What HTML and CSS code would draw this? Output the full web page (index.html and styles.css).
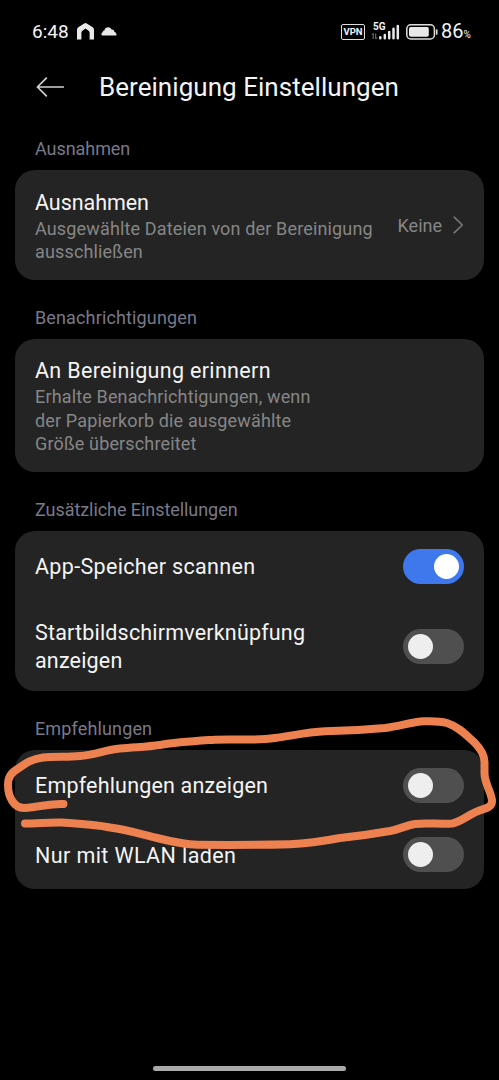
FILE: index.html
```html
<!DOCTYPE html>
<html lang="de">
<head>
<meta charset="utf-8">
<title>Bereinigung Einstellungen</title>
<link rel="stylesheet" href="styles.css">
</head>
<body>
<div class="screen">
  <header class="status">
    <div class="status-left">
      <span class="time">6:48</span>
      <svg class="home" width="17" height="17" viewBox="0 0 17 17"><path d="M0 6.8Q0 5.2 1.3 4.3L7.2.5Q8.5-.3 9.8.5L15.7 4.3Q17 5.2 17 6.8V16.4H12.6V9.8Q12.6 8.8 11.8 8.1L8.5 5.6 5.2 8.1Q4.4 8.8 4.4 9.8V16.4H0Z" fill="#e9e9e9"/></svg>
      <svg class="cloud" width="16" height="9" viewBox="0 0 16 9"><path d="M2.4 8.6C.2 8.6-.4 6.2 1.6 5.2 1.8 3.9 2.7 3.4 3.4 3.4 4.2-.2 8.8-1 10.6 2.5 12.4 2.3 13.3 3.5 13.4 4.9 15 5.2 15.8 6.7 15.3 8.6Z" fill="#e9e9e9"/></svg>
    </div>
    <div class="status-right">
      <span class="vpn">VPN</span>
      <div class="signal">
        <span class="net">5G</span>
        <svg width="29" height="16" viewBox="0 0 29 16">
          <path d="M2.2 15V9.5M.8 11 2.2 9.5M4.7 9.5V15M4.7 15 6.1 13.5" fill="none" stroke="#777" stroke-width="1"/>
          <path d="M9.3 13.2V14.3M13.8 11V14.3M18.2 8V14.3M22.5 4.8V14.3M26.8 2V14.3" fill="none" stroke="#e9e9e9" stroke-width="2.5" stroke-linecap="round"/>
        </svg>
      </div>
      <svg class="battery" width="32" height="16" viewBox="0 0 32 16"><rect x=".8" y=".8" width="27.6" height="14.2" rx="4" fill="none" stroke="#ddd" stroke-width="1.5"/><rect x="3" y="3" width="19.8" height="9.8" rx="1.8" fill="#e9e9e9"/><path d="M30.7 6V10" stroke="#ddd" stroke-width="1.7" stroke-linecap="round"/></svg>
      <span class="percent">86<small>%</small></span>
    </div>
  </header>

  <div class="titlebar">
    <svg class="back" width="29" height="20" viewBox="0 0 29 20"><path d="M10.3 1.2 1.4 10 10.3 18.8M1.4 10H27.3" fill="none" stroke="#d2d2d2" stroke-width="1.7" stroke-linecap="round" stroke-linejoin="round"/></svg>
    <h1>Bereinigung Einstellungen</h1>
  </div>

  <main>
    <h2 class="tight-label">Ausnahmen</h2>
    <section class="card exceptions">
      <div class="copy">
        <h3 class="tight">Ausnahmen</h3>
        <p>Ausgewählte Dateien von der Bereinigung<br>ausschließen</p>
      </div>
      <span class="value">Keine</span>
      <svg class="chevron" width="11" height="18" viewBox="0 0 11 18"><path d="M1.2 1.2 9.3 9 1.2 16.8" fill="none" stroke="#777" stroke-width="1.6" stroke-linecap="round" stroke-linejoin="round"/></svg>
    </section>

    <h2>Benachrichtigungen</h2>
    <section class="card reminder">
      <div class="copy">
        <h3>An Bereinigung erinnern</h3>
        <p>Erhalte Benachrichtigungen, wenn<br>der Papierkorb die ausgewählte<br>Größe überschreitet</p>
      </div>
    </section>

    <h2 class="tight-label">Zusätzliche Einstellungen</h2>
    <section class="card">
      <div class="row"><h3>App-Speicher scannen</h3><span class="switch on"></span></div>
      <div class="row tall"><h3 class="snug">Startbildschirmverknüpfung<br>anzeigen</h3><span class="switch"></span></div>
    </section>

    <h2>Empfehlungen</h2>
    <section class="card">
      <div class="row"><h3 class="snug">Empfehlungen anzeigen</h3><span class="switch"></span></div>
      <div class="row last"><h3 class="wide">Nur mit WLAN laden</h3><span class="switch"></span></div>
    </section>
  </main>
  <div class="gesture"></div>

  <svg class="marker" width="499" height="140" viewBox="0 715 499 140">
    <path d="M63.5 804C52 803 40 807 24 808C14 808 8 797 8 785C8 776 12 772 19 768C26 763 32 759 43 757.5C54 756 68 757.5 80 756C94 755 105 750 120 748.5C135 747 147 747 160 745C178 742 196 741 215 739.7C235 738.6 255 741 275 738C290 736 308 732 325 731.3C345 731 368 729.6 385 728C400 726 412 722 424 721.3C433 721 440 721 447 723C459 727 466 735 474 742C481 749 484.5 756 484.5 762V773C484.5 784 492 793 492 801C492 808 485 808 477 811.5C468 815 461 822 452 823.5C438 824.5 427 822.5 415 824C405 825.5 401 829 390 831C373 834 359 836 340 838C324 841 308 843.5 290 844.2C260 845 223 845 198 844.8C185 844.5 171 841.5 157 838C142 834.5 127 829.5 110 827.5C93 824 77 823.5 62 822.5C50 822 38 823.5 25 823.5"/>
  </svg>
</div>
</body>
</html>
```

FILE: styles.css
```css
* { box-sizing: border-box; }
body { margin: 0; background: #000; color: #f4f4f4; font-family: Roboto, "Noto Sans", sans-serif; }
.screen { position: relative; display: flex; flex-direction: column; width: 499px; height: 1080px; overflow: hidden; background: #000; }
h1, h2, h3, p { margin: 0; font-weight: 400; white-space: nowrap; }

.status { display: flex; justify-content: space-between; height: 62px; padding: 19px 28px 0 32px; }
.status-left, .status-right { display: flex; align-items: center; height: 25px; }
.time { width: 37px; font-size: 19px; line-height: 25px; }
.home { margin-left: 8px; }
.cloud { margin-left: 7px; }
.vpn { width: 24px; height: 16px; border: 1.5px solid #ddd; border-radius: 2px; font-size: 9.5px; font-weight: 700; line-height: 14px; text-align: center; }
.signal { position: relative; width: 29px; height: 16px; margin-left: 6px; }
.signal svg { display: block; }
.net { position: absolute; top: -2px; left: 2px; font-size: 10px; font-weight: 700; line-height: 10px; }
.battery { margin-left: 6px; }
.percent { width: 30px; padding-top: 2px; margin-left: 3px; font-size: 20px; line-height: 25px; white-space: nowrap; }
.percent small { font-size: 10px; }

.titlebar { display: flex; align-items: center; height: 49px; padding-left: 36px; }
.back { margin-right: 34px; }
h1 { font-size: 26px; line-height: 36px; letter-spacing: .04px; }

main { padding: 0 15px; }
h2 { display: flex; align-items: center; height: 59px; padding: 16px 0 0 20px; color: #797989; font-size: 18px; line-height: 24px; letter-spacing: .14px; }
.tight-label { letter-spacing: -.06px; }
.card { overflow: hidden; padding: 0 20px; border-radius: 20px; background: #242424; }
.exceptions { display: flex; align-items: center; height: 110px; }
.reminder { display: flex; align-items: center; height: 133px; }
.copy { flex: 1; padding-top: 2px; }
h3 { font-size: 21.5px; line-height: 28px; letter-spacing: .33px; }
.row h3 { padding-top: 2px; }
.tight { letter-spacing: -.05px; }
.snug { letter-spacing: .18px; }
.wide { letter-spacing: .4px; }
p { color: #868686; font-size: 18px; line-height: 23.4px; letter-spacing: .15px; }
.value { padding-top: 1px; color: #868686; font-size: 18px; line-height: 24px; }
.chevron { margin-left: 11px; }
.row { display: flex; align-items: center; justify-content: space-between; height: 70px; }
.tall { height: 90px; }
.last { height: 69px; }
.switch { display: flex; align-items: center; width: 61px; height: 35px; padding: 0 5px; border-radius: 18px; background: #4f4f4f; }
.switch::before { content: ""; width: 25px; height: 25px; border-radius: 50%; background: #eee; }
.switch.on { justify-content: flex-end; background: #3f78ed; }
.switch.on::before { background: #fff; }

.gesture { width: 193px; height: 5px; margin: auto auto 9px; border-radius: 3px; background: #a9a9a9; }
.marker { position: absolute; top: 715px; left: 0; }
.marker path { fill: none; stroke: #ee8150; stroke-width: 8; stroke-linecap: round; stroke-linejoin: round; }
```
